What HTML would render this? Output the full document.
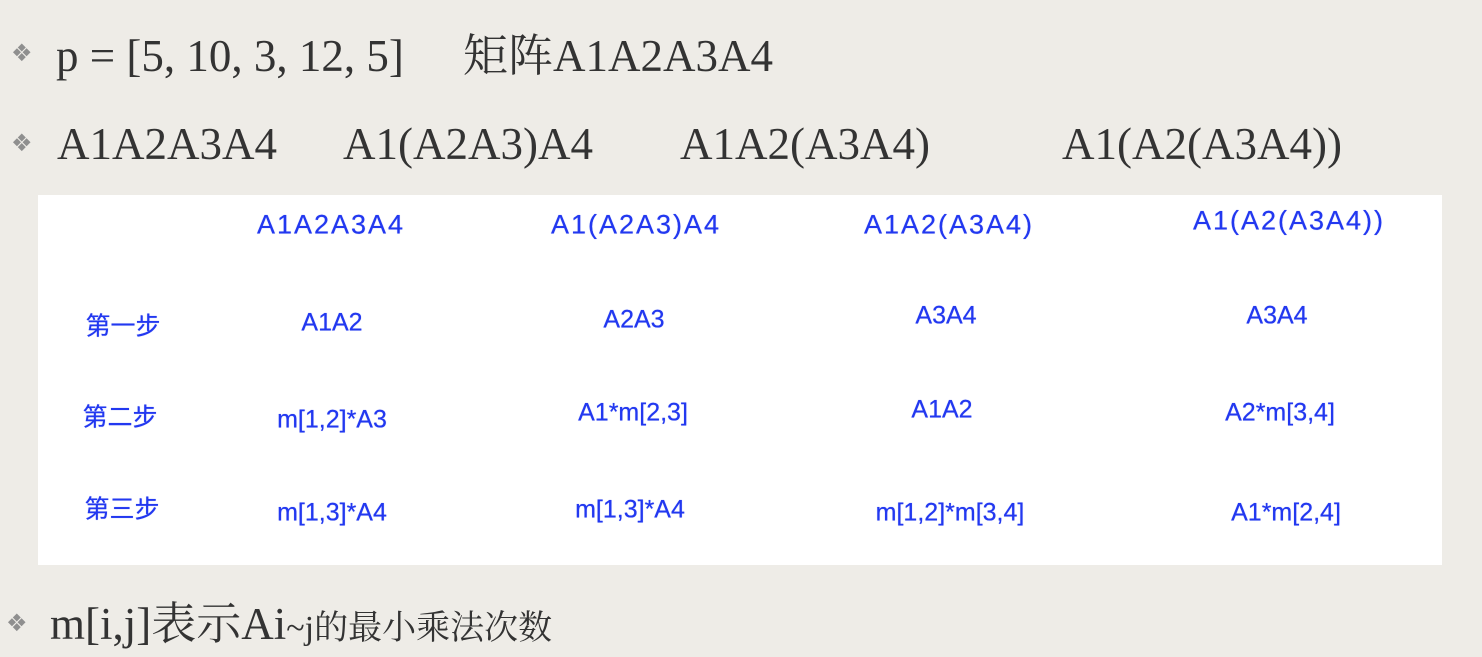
<!DOCTYPE html>
<html><head><meta charset="utf-8"><style>
html,body{margin:0;padding:0;}
body{width:1482px;height:657px;background:#eeece7;position:relative;overflow:hidden;font-family:"Liberation Serif","Noto Serif CJK SC",serif;color:#333;}
.s{position:absolute;font-size:45px;line-height:45px;white-space:nowrap;}
.b{position:absolute;color:#8f8f8f;font-size:24px;line-height:24px;font-family:"DejaVu Sans",sans-serif;}
.box{position:absolute;left:38px;top:195px;width:1404px;height:370px;background:#fff;}
.t{position:absolute;transform:translate(-50%,-50%);font-family:"Liberation Sans","Noto Sans CJK SC",sans-serif;color:#2238f0;font-size:25px;white-space:nowrap;line-height:25px;text-shadow:0 0 0.6px #2238f0;}
.h{font-size:27px;letter-spacing:2px;}
</style></head><body>
<div class="b" style="left:11px;top:41px">❖</div>
<div class="s" style="left:56px;top:34px">p = [5, 10, 3, 12, 5]</div>
<div class="s" style="left:463px;top:34px">矩阵A1A2A3A4</div>
<div class="b" style="left:11px;top:131px">❖</div>
<div class="s" style="left:57px;top:122px">A1A2A3A4</div>
<div class="s" style="left:343px;top:122px">A1(A2A3)A4</div>
<div class="s" style="left:680px;top:122px">A1A2(A3A4)</div>
<div class="s" style="left:1062px;top:122px">A1(A2(A3A4))</div>
<div class="box"></div>
<div class="t h" style="left:331px;top:225px">A1A2A3A4</div>
<div class="t h" style="left:636px;top:225px">A1(A2A3)A4</div>
<div class="t h" style="left:949px;top:225px">A1A2(A3A4)</div>
<div class="t h" style="left:1289px;top:221px">A1(A2(A3A4))</div>
<div class="t" style="left:123px;top:327px">第一步</div>
<div class="t" style="left:332px;top:323px">A1A2</div>
<div class="t" style="left:634px;top:320px">A2A3</div>
<div class="t" style="left:946px;top:316px">A3A4</div>
<div class="t" style="left:1277px;top:316px">A3A4</div>
<div class="t" style="left:120px;top:418px">第二步</div>
<div class="t" style="left:332px;top:420px">m[1,2]*A3</div>
<div class="t" style="left:633px;top:413px">A1*m[2,3]</div>
<div class="t" style="left:942px;top:410px">A1A2</div>
<div class="t" style="left:1280px;top:413px">A2*m[3,4]</div>
<div class="t" style="left:122px;top:510px">第三步</div>
<div class="t" style="left:332px;top:513px">m[1,3]*A4</div>
<div class="t" style="left:630px;top:510px">m[1,3]*A4</div>
<div class="t" style="left:950px;top:513px">m[1,2]*m[3,4]</div>
<div class="t" style="left:1286px;top:513px">A1*m[2,4]</div>
<div class="b" style="left:6px;top:611px">❖</div>
<div class="s" style="left:50px;top:602px">m[i,j]表示Ai<span style="font-size:34px">~j的最小乘法次数</span></div>
</body></html>
